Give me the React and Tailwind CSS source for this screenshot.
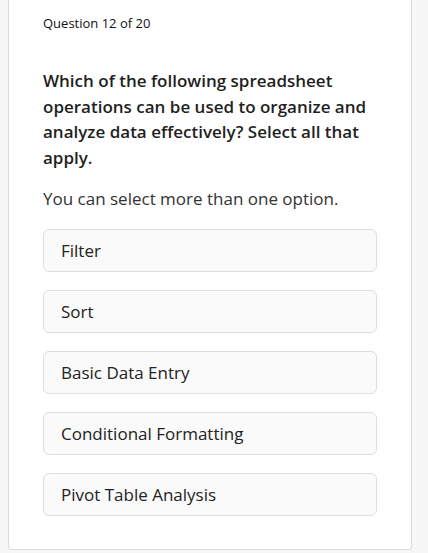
import React from 'react';

const options = ['Filter', 'Sort', 'Basic Data Entry', 'Conditional Formatting', 'Pivot Table Analysis'];

const App = () => {
  return (
    <div className="min-h-screen bg-[#f7f7f7] px-2 pb-[2px] font-['Open_Sans',sans-serif] text-[#222]">
      <div className="bg-white border border-t-0 border-[#dcdcdc] rounded-b-[3px] w-[404px] px-[34px] pt-[14px] pb-[33px]">
        <p className="text-[13px] font-medium leading-[18px] text-[#111]">Question 12 of 20</p>

        <h2 className="mt-[36px] text-[17px] font-semibold leading-[25.5px] text-[#1f1f1f]">
          Which of the following spreadsheet operations can be used to organize and analyze data effectively? Select all that apply.
        </h2>

        <p className="mt-[17px] text-[17px] leading-[24px] text-[#333]">You can select more than one option.</p>

        <div className="mt-[18px] flex flex-col gap-[18px]">
          {options.map((opt) => (
            <button
              key={opt}
              type="button"
              className="w-full h-[43px] px-[17px] text-left text-[17px] text-[#222] bg-[#fafafa] border border-[#dedede] rounded-[6px]"
            >
              {opt}
            </button>
          ))}
        </div>
      </div>
    </div>
  );
};

export default App;
